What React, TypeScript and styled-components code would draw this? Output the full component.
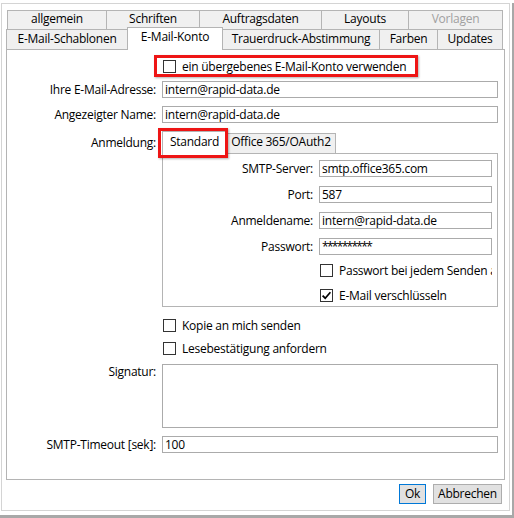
import React from 'react';
import styled, { createGlobalStyle, css } from 'styled-components';

const GlobalStyle = createGlobalStyle`
  html, body {
    margin: 0;
    padding: 0;
    background: #ffffff;
  }
  body {
    font-family: "Open Sans", "Noto Sans", "Liberation Sans", sans-serif;
    font-size: 12px;
    letter-spacing: -0.25px;
    color: #000000;
  }
  *, *::before, *::after {
    box-sizing: border-box;
  }
`;

const Screen = styled.div`
  width: 514px;
  height: 518px;
  padding-top: 3px;
  overflow: hidden;
`;

const WindowShadow = styled.div`
  width: 514px;
  padding: 0 2px 4px 1px;
  border-right: 2px solid #a8a8a8;
  border-bottom: 3px solid #a8a8a8;
`;

const Window = styled.div`
  width: 509px;
  height: 508px;
  border: 1px solid #d4d4d4;
  background: #ffffff;
  padding: 6px 4px 0 4px;
`;

const TabControl = styled.div`
  width: 499px;
`;

const TabRow = styled.div<{ $height: number; $indent?: number; $top?: number }>`
  display: flex;
  align-items: flex-start;
  height: ${p => p.$height}px;
  margin-left: ${p => p.$indent ?? 0}px;
  margin-top: ${p => p.$top ?? 0}px;
`;

const Tab = styled.div<{ $width: number; $active?: boolean; $disabled?: boolean; $padTop?: number; $marked?: boolean }>`
  flex: none;
  width: ${p => p.$width}px;
  height: 100%;
  padding-top: ${p => p.$padTop ?? 0}px;
  border: 1px solid #b4b4b4;
  border-bottom: none;
  background: #f0f0f0;
  color: ${p => (p.$disabled ? '#a0a0a0' : '#000000')};
  text-align: center;
  line-height: 16px;
  white-space: nowrap;

  & + & {
    margin-left: -1px;
  }

  ${p =>
    p.$active &&
    css`
      position: relative;
      z-index: 2;
      height: calc(100% + 3px);
      margin-top: -2px;
      background: #ffffff;
    `}

  ${p =>
    p.$marked &&
    css`
      &::after {
        content: '';
        position: absolute;
        top: -4px;
        bottom: -4px;
        left: -5px;
        right: -2px;
        border: 3px solid #ee1515;
        box-shadow: 1px 1px 2px rgba(0, 0, 0, 0.3);
      }
    `}
`;

const TabPage = styled.div`
  width: 499px;
  height: 431px;
  border: 1px solid #b4b4b4;
  background: #ffffff;
  display: flex;
  flex-direction: column;
`;

const FieldRow = styled.div<{ $top: number; $cols: string }>`
  display: grid;
  grid-template-columns: ${p => p.$cols};
  column-gap: 6px;
  align-items: center;
  margin-top: ${p => p.$top}px;
`;

const Label = styled.div<{ $alignTop?: boolean; $padTop?: number }>`
  text-align: right;
  white-space: nowrap;
  line-height: 16px;
  padding-top: ${p => p.$padTop ?? 0}px;
  ${p =>
    p.$alignTop &&
    css`
      align-self: start;
    `}
`;

const Field = styled.div<{ $height?: number }>`
  height: ${p => p.$height ?? 17}px;
  border: 1px solid #ababab;
  padding: 0 2px;
  line-height: 15px;
  white-space: nowrap;
  overflow: hidden;
  background: #ffffff;
`;

const Secret = styled.span`
  letter-spacing: -1.7px;
`;

const CheckLine = styled.div<{ $marked?: boolean }>`
  display: flex;
  align-items: center;
  gap: 6px;
  height: 17px;
  margin-left: 1px;
  white-space: nowrap;
  overflow: hidden;
  line-height: 16px;

  ${p =>
    p.$marked &&
    css`
      position: relative;
      justify-self: start;
      overflow: visible;

      &::after {
        content: '';
        position: absolute;
        top: -3px;
        bottom: -2px;
        left: -9px;
        right: -12px;
        border: 3px solid #ee1515;
        box-shadow: 1px 1px 2px rgba(0, 0, 0, 0.3);
      }
    `}
`;

const Box = styled.span`
  flex: none;
  width: 13px;
  height: 13px;
  border: 1px solid #333333;
  background: #ffffff;
  display: flex;
  align-items: center;
  justify-content: center;
`;

const InnerTabs = styled.div`
  display: flex;
  flex-direction: column;
`;

const InnerPage = styled.div`
  width: 336px;
  height: 154px;
  border: 1px solid #b4b4b4;
  display: flex;
  flex-direction: column;
`;

const ButtonBar = styled.div`
  display: flex;
  justify-content: flex-end;
  gap: 7px;
  margin-top: 4px;
  padding-right: 3px;
`;

const Button = styled.div<{ $width: number; $default?: boolean }>`
  width: ${p => p.$width}px;
  height: 20px;
  border: 1px solid ${p => (p.$default ? '#0078d7' : '#adadad')};
  background: #e1e1e1;
  text-align: center;
  line-height: 18px;
  white-space: nowrap;
`;

const Check = ({ checked }: { checked?: boolean }) => (
  <Box>
    {checked && (
      <svg width="11" height="11" viewBox="0 0 11 11">
        <path d="M1.6 5.6 L4.2 8.2 L9.4 2.2" fill="none" stroke="#000" strokeWidth="1.7" />
      </svg>
    )}
  </Box>
);

const backTabs = [
  { label: 'allgemein', width: 100 },
  { label: 'Schriften', width: 94 },
  { label: 'Auftragsdaten', width: 123 },
  { label: 'Layouts', width: 88 },
  { label: 'Vorlagen', width: 95, disabled: true },
];

const frontTabs = [
  { label: 'E-Mail-Schablonen', width: 122 },
  { label: 'E-Mail-Konto', width: 96, active: true },
  { label: 'Trauerdruck-Abstimmung', width: 158 },
  { label: 'Farben', width: 59 },
  { label: 'Updates', width: 66 },
];

const MAIN_COLS = '149px 336px';
const INNER_COLS = '150px 173px';

export default function App() {
  return (
    <>
      <GlobalStyle />
      <Screen>
        <WindowShadow>
          <Window>
            <TabControl>
              <TabRow $height={19} $indent={1}>
                {backTabs.map(t => (
                  <Tab key={t.label} $width={t.width} $disabled={t.disabled}>
                    {t.label}
                  </Tab>
                ))}
              </TabRow>
              <TabRow $height={20}>
                {frontTabs.map(t => (
                  <Tab key={t.label} $width={t.width} $active={t.active} $padTop={1}>
                    {t.label}
                  </Tab>
                ))}
              </TabRow>
              <TabPage>
                <FieldRow $top={8} $cols={MAIN_COLS}>
                  <span />
                  <CheckLine $marked>
                    <Check />
                    ein übergebenes E-Mail-Konto verwenden
                  </CheckLine>
                </FieldRow>
                <FieldRow $top={6} $cols={MAIN_COLS}>
                  <Label>Ihre E-Mail-Adresse:</Label>
                  <Field>intern@rapid-data.de</Field>
                </FieldRow>
                <FieldRow $top={8} $cols={MAIN_COLS}>
                  <Label>Angezeigter Name:</Label>
                  <Field>intern@rapid-data.de</Field>
                </FieldRow>
                <FieldRow $top={8} $cols={MAIN_COLS}>
                  <Label $alignTop $padTop={4}>
                    Anmeldung:
                  </Label>
                  <InnerTabs>
                    <TabRow $height={20} $top={2}>
                      <Tab $width={65} $active $marked $padTop={2}>
                        Standard
                      </Tab>
                      <Tab $width={110}>Office 365/OAuth2</Tab>
                    </TabRow>
                    <InnerPage>
                      <FieldRow $top={6} $cols={INNER_COLS}>
                        <Label>SMTP-Server:</Label>
                        <Field>smtp.office365.com</Field>
                      </FieldRow>
                      <FieldRow $top={9} $cols={INNER_COLS}>
                        <Label>Port:</Label>
                        <Field>587</Field>
                      </FieldRow>
                      <FieldRow $top={9} $cols={INNER_COLS}>
                        <Label>Anmeldename:</Label>
                        <Field>intern@rapid-data.de</Field>
                      </FieldRow>
                      <FieldRow $top={9} $cols={INNER_COLS}>
                        <Label>Passwort:</Label>
                        <Field>
                          <Secret>**********</Secret>
                        </Field>
                      </FieldRow>
                      <FieldRow $top={7} $cols={INNER_COLS}>
                        <span />
                        <CheckLine>
                          <Check />
                          Passwort bei jedem Senden abfragen
                        </CheckLine>
                      </FieldRow>
                      <FieldRow $top={8} $cols={INNER_COLS}>
                        <span />
                        <CheckLine>
                          <Check checked />
                          E-Mail verschlüsseln
                        </CheckLine>
                      </FieldRow>
                    </InnerPage>
                  </InnerTabs>
                </FieldRow>
                <FieldRow $top={10} $cols={MAIN_COLS}>
                  <span />
                  <CheckLine>
                    <Check />
                    Kopie an mich senden
                  </CheckLine>
                </FieldRow>
                <FieldRow $top={6} $cols={MAIN_COLS}>
                  <span />
                  <CheckLine>
                    <Check />
                    Lesebestätigung anfordern
                  </CheckLine>
                </FieldRow>
                <FieldRow $top={7} $cols={MAIN_COLS}>
                  <Label $alignTop>Signatur:</Label>
                  <Field $height={64} />
                </FieldRow>
                <FieldRow $top={8} $cols={MAIN_COLS}>
                  <Label>SMTP-Timeout [sek]:</Label>
                  <Field>100</Field>
                </FieldRow>
              </TabPage>
            </TabControl>
            <ButtonBar>
              <Button $width={27} $default>
                Ok
              </Button>
              <Button $width={69}>Abbrechen</Button>
            </ButtonBar>
          </Window>
        </WindowShadow>
      </Screen>
    </>
  );
}
